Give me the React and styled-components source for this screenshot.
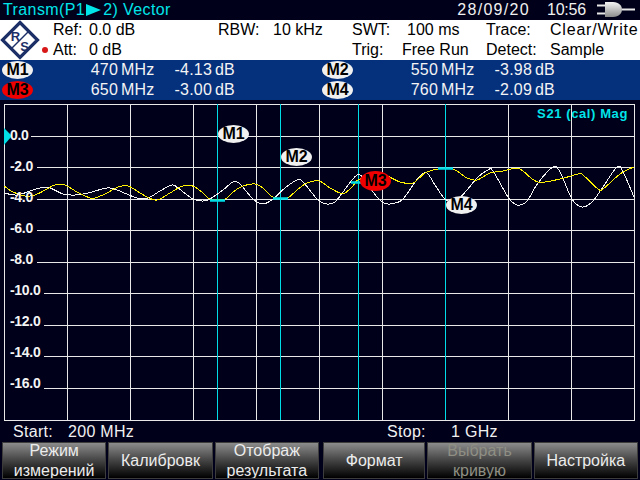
import React from "react";
import styled, { createGlobalStyle } from "styled-components";

const GlobalStyle = createGlobalStyle`
  html, body {
    margin: 0;
    padding: 0;
    background: #00001a;
  }
`;

const HLINES = [136, 167, 199, 230, 262, 293, 325, 356, 388];
const VLINES = [4, 67, 130, 193, 256, 319, 382, 445, 508, 571, 634];
const CURSORS = [217, 280, 358, 445];
const LEVELS = ["0.0", "-2.0", "-4.0", "-6.0", "-8.0", "-10.0", "-12.0", "-14.0", "-16.0"];

const YELLOW = [
  [4, 186], [13, 192], [25, 196], [35, 195], [47, 189], [55, 185], [65, 185], [77, 192], [90, 198], [95, 198],
  [107, 193], [118, 187], [128, 186], [137, 191], [147, 197], [157, 200], [170, 193], [180, 187], [188, 185],
  [195, 187], [203, 193], [210, 199], [225, 199], [233, 192], [243, 186], [255, 184], [263, 188], [273, 197],
  [287, 198], [297, 190], [307, 183], [319, 181], [330, 188], [340, 193], [345, 193], [353, 186], [358, 180],
  [375, 176], [387, 176], [400, 182], [413, 183], [425, 173], [438, 169], [453, 169], [467, 178], [477, 180],
  [490, 173], [503, 171], [517, 168], [523, 171], [538, 182], [560, 179], [578, 174], [583, 175], [598, 189],
  [603, 189], [613, 180], [623, 172], [634, 167],
];

const WHITE = [
  [4, 193], [17, 195], [33, 190], [40, 188], [50, 188], [63, 194], [75, 195], [88, 193], [107, 188], [117, 190],
  [137, 198], [148, 198], [160, 191], [172, 185], [178, 188], [193, 199], [203, 201], [210, 199], [223, 190],
  [233, 182], [240, 184], [253, 199], [263, 204], [273, 199], [285, 188], [297, 180], [303, 182], [318, 200],
  [327, 204], [335, 202], [343, 192], [357, 175], [365, 180], [373, 192], [382, 202], [390, 204], [402, 200],
  [413, 185], [420, 176], [427, 173], [435, 185], [445, 199], [455, 202], [467, 190], [477, 178], [488, 170],
  [493, 171], [508, 197], [517, 205], [527, 201], [538, 183], [553, 167], [560, 172], [572, 199], [582, 207],
  [592, 202], [603, 187], [617, 167], [623, 172], [634, 197],
];

// catmull-rom through the sampled points
const smooth = (pts) => {
  let d = `M${pts[0][0]} ${pts[0][1]}`;
  for (let i = 0; i < pts.length - 1; i++) {
    const p0 = pts[i - 1] || pts[i];
    const p1 = pts[i];
    const p2 = pts[i + 1];
    const p3 = pts[i + 2] || p2;
    const c1x = p1[0] + (p2[0] - p0[0]) / 6;
    const c1y = p1[1] + (p2[1] - p0[1]) / 6;
    const c2x = p2[0] - (p3[0] - p1[0]) / 6;
    const c2y = p2[1] - (p3[1] - p1[1]) / 6;
    d += ` C${c1x} ${c1y} ${c2x} ${c2y} ${p2[0]} ${p2[1]}`;
  }
  return d;
};

const lineStart = (i) => (i === 0 ? 31 : i < 5 ? 37 : 44);

const Logo = () => (
  <svg width="40" height="40" viewBox="0 0 40 40">
    <path d="M20 2.5 L37.5 20 L20 37.5 L2.5 20 Z" fill="#fff" stroke="#1c2f66" strokeWidth="3.2" />
    <path d="M11 29 L29 11" stroke="#1c2f66" strokeWidth="1.5" />
    <text x="15.5" y="20.5" fontSize="13" fontWeight="700" fontFamily="Liberation Sans" fill="#1c2f66" textAnchor="middle">R</text>
    <text x="24.5" y="30.5" fontSize="13" fontWeight="700" fontFamily="Liberation Sans" fill="#1c2f66" textAnchor="middle">S</text>
  </svg>
);

const PlugIcon = () => (
  <svg width="40" height="16" viewBox="0 0 40 16">
    <defs>
      <linearGradient id="plug" x1="0" y1="0" x2="0" y2="1">
        <stop offset="0" stopColor="#f4f4f4" />
        <stop offset="1" stopColor="#8c8c8c" />
      </linearGradient>
    </defs>
    <path d="M0 3.5 H9 M0 11.5 H9" stroke="#e8e8e8" strokeWidth="2" />
    <path d="M8 0 H16 C22 0 25 4 25 7.5 C25 11 22 15 16 15 H8 Z" fill="url(#plug)" />
    <path d="M25 7.5 H38" stroke="#e8e8e8" strokeWidth="2" />
  </svg>
);

const Trace = () => (
  <svg width="640" height="321" viewBox="0 100 640 321" style={{ display: "block" }}>
    {HLINES.map((y, i) => (
      <line key={y} x1={lineStart(i)} x2="634" y1={y + 0.5} y2={y + 0.5} stroke="#e8e8e8" />
    ))}
    <line x1="4" x2="635" y1="104.5" y2="104.5" stroke="#e8e8e8" />
    <line x1="4" x2="635" y1="420.5" y2="420.5" stroke="#e8e8e8" />
    {VLINES.map((x) => (
      <line key={x} x1={x + 0.5} x2={x + 0.5} y1="104" y2="420" stroke="#e8e8e8" />
    ))}
    {CURSORS.map((x) => (
      <line key={x} x1={x + 0.5} x2={x + 0.5} y1="104" y2="420" stroke="#00dde6" />
    ))}
    <path d={smooth(WHITE)} fill="none" stroke="#f4f4f4" strokeWidth="1" shapeRendering="crispEdges" />
    <path d={smooth(YELLOW)} fill="none" stroke="#fff200" strokeWidth="1" shapeRendering="crispEdges" />
    <path d="M210 200.5 H225 M273 198.5 H288 M351 182.5 H366 M438 168.5 H453" stroke="#00dde6" strokeWidth="2.5" />
    <path d="M4 128 L12 136 L4 145 Z" fill="#00dde6" />
  </svg>
);

const App = () => (
  <Screen>
    <GlobalStyle />
    <TitleBar>
      <Title>Transm(P1<Arrow />2) Vector</Title>
      <Clock>
        <DateText>28/09/20</DateText>
        <TimeText>10:56</TimeText>
        <PlugIcon />
      </Clock>
    </TitleBar>

    <Info>
      <LogoBox>
        <Logo />
        <RedDot />
      </LogoBox>
      <InfoGrid>
        <span>Ref:</span><span>0.0 dB</span>
        <span>RBW:</span><span>10 kHz</span>
        <span>SWT:</span><Nudge>100 ms</Nudge>
        <span>Trace:</span><Wide>Clear/Write</Wide>
        <span>Att:</span><span>0 dB</span>
        <span></span><span></span>
        <span>Trig:</span><span>Free Run</span>
        <span>Detect:</span><span>Sample</span>
      </InfoGrid>
    </Info>

    <Markers>
      <MarkerRow>
        <MarkerPill>M1</MarkerPill><Freq>470</Freq><Unit>MHz</Unit><Level>-4.13</Level><Unit>dB</Unit>
      </MarkerRow>
      <MarkerRow>
        <MarkerPill>M2</MarkerPill><Freq>550</Freq><Unit>MHz</Unit><Level>-3.98</Level><Unit>dB</Unit>
      </MarkerRow>
      <MarkerRow>
        <MarkerPill $active>M3</MarkerPill><Freq>650</Freq><Unit>MHz</Unit><Level>-3.00</Level><Unit>dB</Unit>
      </MarkerRow>
      <MarkerRow>
        <MarkerPill>M4</MarkerPill><Freq>760</Freq><Unit>MHz</Unit><Level>-2.09</Level><Unit>dB</Unit>
      </MarkerRow>
    </Markers>

    <Plot>
      <Trace />
      <TraceName>S21 (cal) Mag</TraceName>
      {LEVELS.map((label, i) => (
        <LevelLabel key={label} $y={26 + i * 31}>{label}</LevelLabel>
      ))}
      <PlotMarker $x={218} $y={25}>M1</PlotMarker>
      <PlotMarker $x={281} $y={48}>M2</PlotMarker>
      <PlotMarker $x={360} $y={71} $active>M3</PlotMarker>
      <PlotMarker $x={446} $y={96}>M4</PlotMarker>
    </Plot>

    <Span>
      <SpanLabel $w={55}>Start:</SpanLabel>
      <SpanValue $w={319}>200 MHz</SpanValue>
      <SpanLabel $w={64}>Stop:</SpanLabel>
      <SpanValue>1 GHz</SpanValue>
    </Span>

    <Softkeys>
      <Softkey>Режим<br />измерений</Softkey>
      <Softkey>Калибровк</Softkey>
      <Softkey>Отображ<br />результата</Softkey>
      <Softkey>Формат</Softkey>
      <Softkey $disabled>Выбрать<br />кривую</Softkey>
      <Softkey>Настройка</Softkey>
    </Softkeys>
  </Screen>
);

const Screen = styled.div`
  width: 640px;
  height: 480px;
  overflow: hidden;
  display: flex;
  flex-direction: column;
  background: #00001a;
  font-family: "Liberation Sans", Arial, sans-serif;

  & > * {
    flex: none;
  }
`;

const TitleBar = styled.div`
  height: 20px;
  display: flex;
  align-items: center;
  justify-content: space-between;
  padding: 0 3px;
  color: #f0f0f0;
`;

const Title = styled.div`
  display: flex;
  align-items: center;
  color: #00e5ea;
  font-size: 16px;
  letter-spacing: 0.4px;
  white-space: pre;
`;

const Arrow = styled.span`
  width: 0;
  height: 0;
  margin: 0 2px 0 1px;
  border-left: 15px solid #00e5ea;
  border-top: 6.5px solid transparent;
  border-bottom: 6.5px solid transparent;
`;

const Clock = styled.div`
  display: flex;
  align-items: center;
  font-size: 16px;
`;

const DateText = styled.span`
  margin-right: 17px;
  letter-spacing: 1.3px;
`;

const TimeText = styled.span`
  margin-right: 11px;
  letter-spacing: -0.2px;
`;

const Info = styled.div`
  height: 40px;
  display: flex;
  background: #fff;
  color: #000;
  font-size: 16px;
`;

const LogoBox = styled.div`
  position: relative;
  width: 53px;
  flex: none;
`;

const RedDot = styled.div`
  position: absolute;
  left: 42px;
  top: 27px;
  width: 6px;
  height: 6px;
  border-radius: 50%;
  background: #d81818;
`;

const InfoGrid = styled.div`
  flex: 1;
  display: grid;
  grid-template-columns: 36px 129px 55px 79px 50px 84px 64px 1fr;
  grid-template-rows: 20px 20px;
  align-items: center;
  white-space: nowrap;
`;

const Nudge = styled.span`
  margin-left: 5px;
`;

const Wide = styled.span`
  letter-spacing: 0.8px;
`;

const Markers = styled.div`
  height: 40px;
  display: grid;
  grid-template-columns: 320px 320px;
  grid-template-rows: 20px 20px;
  background: #04307c;
  color: #f4f4f4;
  font-size: 16px;
  letter-spacing: 0.2px;
`;

const MarkerRow = styled.div`
  display: flex;
  align-items: center;
  padding-left: 2px;
`;

const MarkerPill = styled.div`
  width: 31px;
  height: 18px;
  display: flex;
  align-items: center;
  justify-content: center;
  border-radius: 50%;
  background: ${({ $active }) => ($active ? "#f00000" : "#f0f0f0")};
  color: #000;
  font-size: 16px;
  font-weight: 700;
  letter-spacing: 0;
`;

const Freq = styled.span`
  width: 85px;
  text-align: right;
`;

const Level = styled.span`
  width: 50px;
  margin-left: 6px;
  text-align: right;
`;

const Unit = styled.span`
  width: 35px;
  margin-left: 3px;
`;

const Plot = styled.div`
  position: relative;
  height: 321px;
`;

const TraceName = styled.div`
  position: absolute;
  right: 12px;
  top: 6px;
  color: #00e5ea;
  font-size: 13px;
  font-weight: 700;
  letter-spacing: 0.6px;
`;

const LevelLabel = styled.div`
  position: absolute;
  left: 10px;
  top: ${({ $y }) => $y}px;
  color: #f4f4f4;
  font-size: 14px;
  font-weight: 700;
  line-height: 18px;
  letter-spacing: -0.3px;
`;

const PlotMarker = styled(MarkerPill)`
  position: absolute;
  left: ${({ $x }) => $x}px;
  top: ${({ $y }) => $y}px;
  height: ${({ $active }) => ($active ? 20 : 18)}px;
`;

const Span = styled.div`
  height: 21px;
  display: flex;
  align-items: center;
  padding-left: 13px;
  color: #f0f0f0;
  font-size: 16px;
  letter-spacing: 0.3px;
`;

const SpanLabel = styled.span`
  width: ${({ $w }) => $w}px;
`;

const SpanValue = styled.span`
  width: ${({ $w }) => ($w ? `${$w}px` : "auto")};
`;

const Softkeys = styled.div`
  height: 37px;
  display: grid;
  grid-template-columns: repeat(6, 1fr);
  grid-template-rows: 37px;
  gap: 2px;
  padding: 0 2px;
`;

const Softkey = styled.div`
  display: flex;
  align-items: center;
  justify-content: center;
  text-align: center;
  box-sizing: border-box;
  height: 37px;
  overflow: hidden;
  border: 1px solid #3c3c3c;
  background: linear-gradient(#8c8c8c, #4a4a4a 45%, #000);
  color: ${({ $disabled }) => ($disabled ? "#8f8f84" : "#ececec")};
  font-size: 16px;
  line-height: 20px;
  white-space: nowrap;

  &:nth-child(4) {
    margin-left: 2px;
  }
`;

export default App;
